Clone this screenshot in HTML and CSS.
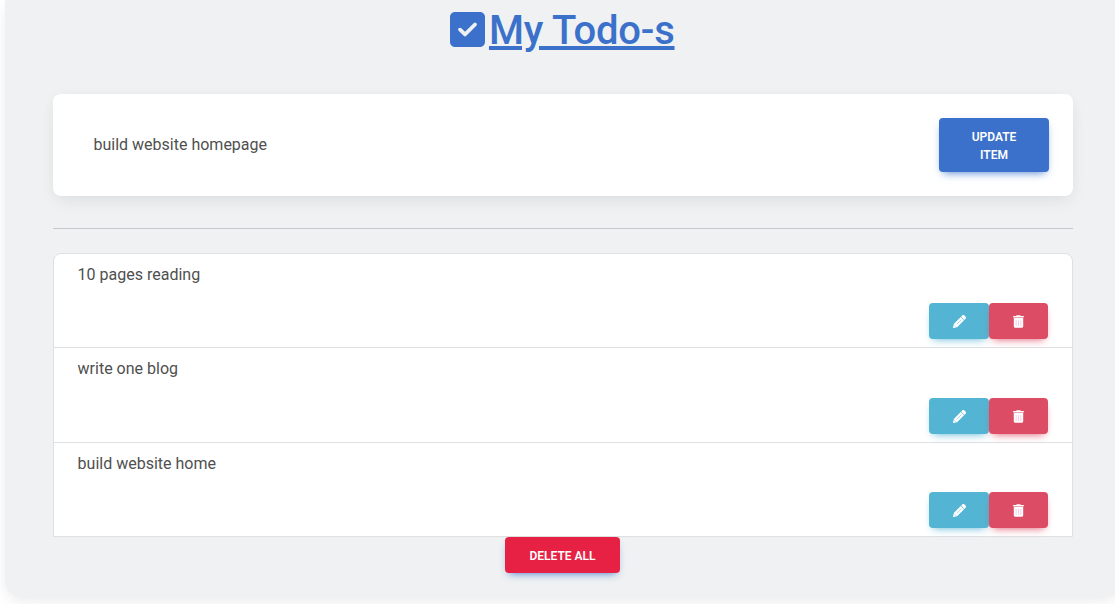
FILE: index.html
```html
<!DOCTYPE html>
<html lang="en">
<head>
<meta charset="utf-8">
<title>My Todo-s</title>
<link rel="stylesheet" href="styles.css">
</head>
<body>
<svg class="sprite" aria-hidden="true">
  <symbol id="pencil" viewBox="0 0 512 512"><path d="M492 59C518 85 518 124 492 150L450 192L320 62L362 20C388-6 427-6 453 20L492 59zM304 78L434 208L180 462Q165 475 147 480L30 511Q-3 518 1 482L32 365Q37 347 50 332L304 78z"/><path class="groove" d="M160 352L312 200M72 412L104 440"/></symbol>
  <symbol id="trash" viewBox="0 0 448 512"><path d="M135.200 17.700C140.600 6.800 151.700 0 163.800 0H284.200C296.300 0 307.400 6.800 312.800 17.700L320 32H416C433.700 32 448 46.300 448 64S433.700 96 416 96H32C14.300 96 0 81.700 0 64S14.300 32 32 32H128L135.200 17.700zM32 118H416V448C416 483.300 387.300 512 352 512H96C60.700 512 32 483.300 32 448V118z"/><path class="slats" d="M128 200V440M224 200V440M320 200V440"/></symbol>
</svg>
<main class="card">
  <h1 class="title">
    <svg class="title-icon" viewBox="0 32 448 448"><path d="M64 32C28.700 32 0 60.700 0 96V416c0 35.300 28.700 64 64 64H384c35.300 0 64-28.700 64-64V96c0-35.300-28.700-64-64-64H64zM337 209L209 337c-9.400 9.400-24.600 9.400-33.900 0l-64-64c-9.400-9.400-9.400-24.600 0-33.900s24.600-9.400 33.900 0l47 47L303 175c9.400-9.400 24.600-9.400 33.900 0s9.400 24.600 0 33.900z"/></svg>
    <u class="title-text">My Todo-s</u>
  </h1>
  <form class="entry">
    <input class="entry-input" type="text" value="build website homepage">
    <button class="btn btn-update" type="button">Update item</button>
  </form>
  <hr class="rule">
  <ul class="list">
    <li class="item">
      <p class="item-text">10 pages reading</p>
      <div class="actions">
        <button class="btn btn-edit" type="button"><svg class="icon"><use href="#pencil"/></svg></button>
        <button class="btn btn-remove" type="button"><svg class="icon icon-trash"><use href="#trash"/></svg></button>
      </div>
    </li>
    <li class="item item-tall">
      <p class="item-text">write one blog</p>
      <div class="actions">
        <button class="btn btn-edit" type="button"><svg class="icon"><use href="#pencil"/></svg></button>
        <button class="btn btn-remove" type="button"><svg class="icon icon-trash"><use href="#trash"/></svg></button>
      </div>
    </li>
    <li class="item">
      <p class="item-text">build website home</p>
      <div class="actions">
        <button class="btn btn-edit" type="button"><svg class="icon"><use href="#pencil"/></svg></button>
        <button class="btn btn-remove" type="button"><svg class="icon icon-trash"><use href="#trash"/></svg></button>
      </div>
    </li>
  </ul>
  <div class="footer"><button class="btn btn-clear" type="button">Delete all</button></div>
</main>
</body>
</html>
```
FILE: styles.css
```css
* { box-sizing: border-box; }
html { overflow: hidden; }
body {
  margin: 0;
  height: 604px;
  padding-left: 5px;
  overflow: hidden;
  background: #fff;
  color: #4f4f4f;
  font: 400 16px/1.6 Roboto, sans-serif;
}
.sprite { display: none; }
.card {
  width: 1116px;
  height: 597px;
  padding: 5px 48px 0;
  background: #eff1f2;
  border-radius: 0 0 16px 16px;
  box-shadow: 0 2px 15px -3px rgba(0, 0, 0, .07), 0 10px 20px -2px rgba(0, 0, 0, .04);
}
.title {
  display: flex;
  justify-content: center;
  gap: 4px;
  height: 48px;
  margin: 0 0 41px;
  padding-right: 1.500px;
  color: #3b71ca;
  font-size: 40px;
  font-weight: 500;
  line-height: 48px;
}
.title-text {
  padding-top: 1.5px;
  letter-spacing: -.2px;
  text-decoration-thickness: 4px;
  text-underline-offset: 2px;
}
.title-icon { width: 35px; height: 35px; margin-top: 6.5px; fill: currentColor; }
.entry {
  display: flex;
  align-items: center;
  height: 102px;
  padding: 24px;
  background: #fff;
  border-radius: 8px;
  box-shadow: 0 2px 15px -3px rgba(0, 0, 0, .07), 0 10px 20px -2px rgba(0, 0, 0, .04);
}
.entry-input {
  flex: 1;
  min-width: 0;
  padding: 0 16.500px;
  border: 0;
  outline: 0;
  background: transparent;
  color: #4f4f4f;
  font: inherit;
}
.btn {
  padding: 0;
  border: 0;
  border-radius: 4px;
  color: #fff;
  font: 600 12px/18px Roboto, sans-serif;
  text-transform: uppercase;
}
.btn-update {
  width: 110px;
  height: 54px;
  padding: 1px 24px 0;
  background: #3b71ca;
  box-shadow: 0 4px 9px -4px #3b71ca;
}
.rule { height: 1px; margin: 32px 0 24px; border: 0; background: #c5c8ca; }
.list {
  height: 284px;
  margin: 0;
  padding: 0;
  list-style: none;
  background: #fff;
  border: 1px solid #dfe0e1;
  border-radius: 8px 8px 0 0;
}
.item { height: 94px; padding: 8px 24px 8px 23.600px; border-bottom: 1px solid #dfe0e1; }
.item-tall { height: 95px; }
.item:last-child { border-bottom: 0; }
.item-text { height: 25px; margin: 0 0 16px; line-height: 25px; }
.item-tall .item-text { margin-bottom: 17px; }
.actions { display: flex; justify-content: flex-end; }
.btn-edit, .btn-remove {
  display: flex;
  align-items: center;
  justify-content: center;
  height: 36px;
}
.btn-edit { width: 60px; background: #54b4d3; box-shadow: 0 4px 9px -4px #54b4d3; }
.btn-remove { width: 59px; background: #dc4c64; box-shadow: 0 4px 9px -4px #dc4c64; }
.icon { width: 13px; height: 13px; fill: currentColor; }
.icon-trash { width: 11px; }
.slats { fill: none; stroke: #f3bfdc; stroke-width: 32; }
.groove { fill: none; stroke: #8fcde2; stroke-width: 30; stroke-linecap: round; }
.footer { display: flex; justify-content: center; padding-right: 1px; }
.btn-clear {
  width: 115px;
  height: 36px;
  padding-top: 1px;
  background: #e62143;
  box-shadow: 0 4px 9px -4px #3b71ca;
}
```
